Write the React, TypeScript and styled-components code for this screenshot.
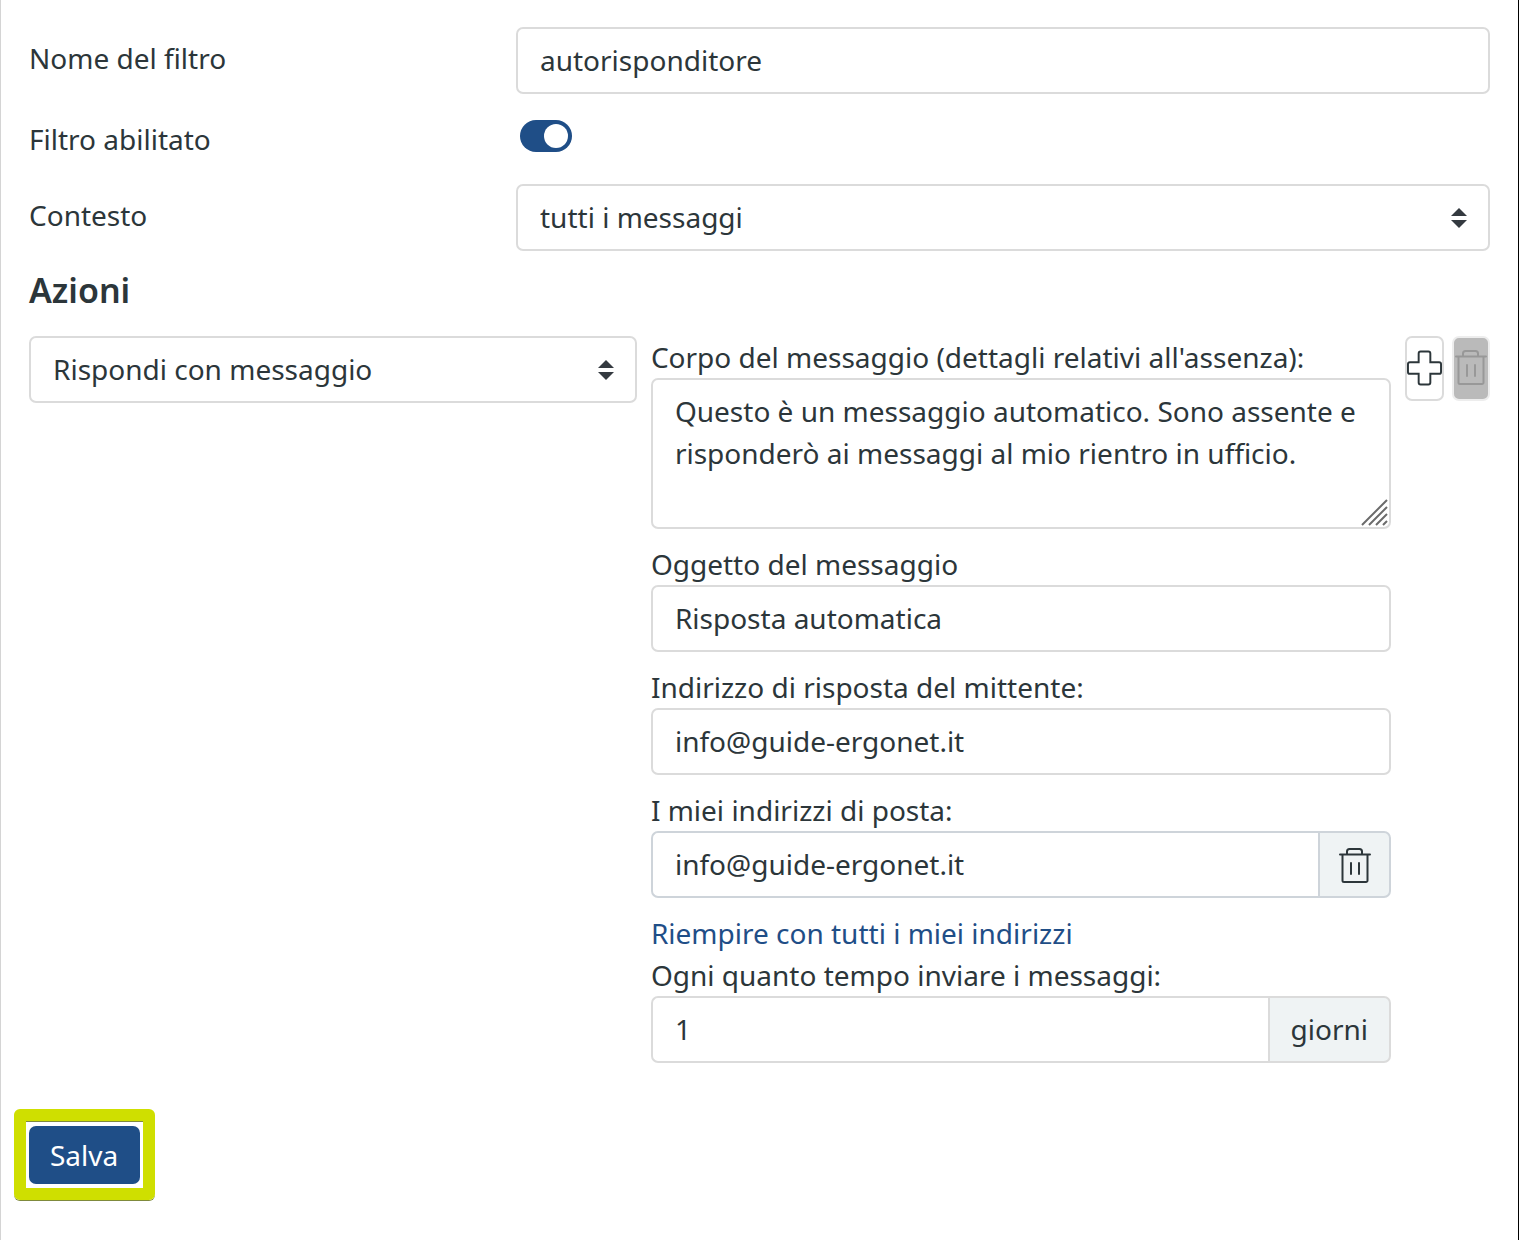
import React, { useState } from "react";
import styled, { createGlobalStyle, css } from "styled-components";

const ink = "#2c363a";
const line = "#dbdbdb";
const brand = "#1f4e87";
const tint = "#eff3f4";

const GlobalStyle = createGlobalStyle`
  *, *::before, *::after { box-sizing: border-box; }
  body {
    margin: 0;
    background: #fff;
    color: ${ink};
    font: 400 28px/42px "Noto Sans", "Open Sans", sans-serif;
  }
  button, input, select, textarea { font: inherit; color: inherit; margin: 0; }
`;

const Page = styled.main`
  min-height: 100vh;
  padding: 27px 13px;
  border-left: 1px solid #d4d4d4;
  border-right: 1px solid #000;
`;

const Fields = styled.div`
  display: flex;
  flex-direction: column;
  gap: 14px;
  padding: 0 15px;
`;

const Row = styled.div`
  display: grid;
  grid-template-columns: 1fr 2fr;
  align-items: start;
`;

const RowLabel = styled.label`
  padding: 10px 0;
`;

const control = css`
  display: block;
  width: 100%;
  min-width: 0;
  height: 67px;
  padding: 0 22px 2px;
  background: #fff;
  border: 2px solid ${line};
  border-radius: 7px;
  outline: none;

  &:focus-visible { border-color: ${brand}; }
`;

const TextInput = styled.input`
  ${control}
`;

const TextArea = styled.textarea`
  ${control}
  height: 151px;
  padding: 10px 22px;
  overflow: hidden;
  resize: none;
`;

const SelectBox = styled.select`
  ${control}
  appearance: none;
  padding-right: 60px;
`;

const Overlaid = styled.div`
  position: relative;
`;

const ArrowsIcon = styled.svg`
  position: absolute;
  top: 24px;
  right: 23px;
  pointer-events: none;
`;

const GripIcon = styled.svg`
  position: absolute;
  right: 2px;
  bottom: 2px;
  pointer-events: none;
`;

const Toggle = styled.input`
  appearance: none;
  display: flex;
  width: 52px;
  height: 32px;
  margin: 12px 4px;
  padding: 4px;
  border-radius: 16px;
  background: #b3bcc0;
  cursor: pointer;

  &::before {
    content: "";
    width: 24px;
    height: 24px;
    border-radius: 50%;
    background: #fff;
  }

  &:checked {
    justify-content: flex-end;
    background: ${brand};
  }
`;

const Heading = styled.h2`
  margin: 0 0 20px;
  font-size: 34px;
  font-weight: 600;
  line-height: 51px;
`;

const ActionRow = styled.div`
  display: grid;
  grid-template-columns: 23fr 28fr auto;
  gap: 14px;
  align-items: start;
`;

const Details = styled.div`
  display: flex;
  flex-direction: column;
  gap: 14px;
`;

const Field = styled.div`
  min-width: 0;
`;

const FieldLabel = styled.label`
  display: block;
`;

const InputGroup = styled.div<{ $edge?: string }>`
  display: flex;

  > * { border-color: ${(p) => p.$edge ?? line}; }
  > :first-child {
    flex: 1;
    border-right: 0;
    border-radius: 7px 0 0 7px;
  }
`;

const addon = css`
  display: flex;
  align-items: center;
  justify-content: center;
  background: ${tint};
  border-width: 2px;
  border-style: solid;
  border-radius: 0 7px 7px 0;
`;

const AddonButton = styled.button`
  ${addon}
  width: 73px;
  padding: 2px 0 0;
  cursor: pointer;
`;

const AddonText = styled.span`
  ${addon}
  padding: 0 21px 2px;
`;

const FillLink = styled.a`
  display: block;
  color: ${brand};
  text-decoration: none;
`;

const Tools = styled.div`
  display: flex;
  gap: 8px;
`;

const ToolButton = styled.button`
  display: flex;
  align-items: center;
  justify-content: center;
  width: 39px;
  height: 65px;
  padding: 0 0 2px;
  background: #fff;
  border: 2px solid ${line};
  border-radius: 7px;
  cursor: pointer;

  &:disabled {
    width: 38px;
    background: #bababa;
    border-color: #ededed;
    color: #989898;
    cursor: default;
  }
`;

const Highlight = styled.div`
  width: fit-content;
  margin-top: 46px;
  padding: 5px 3px 4px;
  border: 12px solid #cfdf00;
  border-radius: 6px;
  box-shadow: 0 1px 0 #7f8a3c, inset 0 1px 0 #7f8a3c;
`;

const SaveButton = styled.button`
  display: block;
  height: 58px;
  padding: 0 22px 0 21px;
  border: 0;
  border-radius: 7px;
  background: ${brand};
  color: #fff;
  cursor: pointer;
`;

function Select({ id, label, options }: { id: string; label?: string; options: string[] }) {
  return (
    <Overlaid>
      <SelectBox id={id} aria-label={label}>
        {options.map((o) => (
          <option key={o}>{o}</option>
        ))}
      </SelectBox>
      <ArrowsIcon width="16" height="20" viewBox="0 0 16 20" fill="#343a40" aria-hidden="true">
        <path d="M8 0l8 8H0zM8 20l8-8H0z" />
      </ArrowsIcon>
    </Overlaid>
  );
}

function TrashIcon() {
  return (
    <svg width="34" height="38" viewBox="0 0 34 38" fill="none" stroke="currentColor" strokeWidth="2" strokeLinecap="round" strokeLinejoin="round" aria-hidden="true">
      <path d="M2 7.5h30M9 7V4.500a2.500 2.500 0 0 1 2.500-2.500h10a2.500 2.500 0 0 1 2.500 2.500V7M4.500 8v25.500a1.500 1.500 0 0 0 1.500 1.500h22a1.500 1.500 0 0 0 1.500-1.500V8M13 16v11M21 16v11" />
    </svg>
  );
}

function PlusIcon() {
  return (
    <svg width="36" height="36" viewBox="0 0 36 36" fill="none" stroke="currentColor" strokeWidth="2" aria-hidden="true">
      <path d="M14 1h8a2 2 0 0 1 2 2v9h9a2 2 0 0 1 2 2v8a2 2 0 0 1-2 2h-9v9a2 2 0 0 1-2 2h-8a2 2 0 0 1-2-2v-9H3a2 2 0 0 1-2-2v-8a2 2 0 0 1 2-2h9V3a2 2 0 0 1 2-2z" />
    </svg>
  );
}

export default function App() {
  const [enabled, setEnabled] = useState(true);
  const [address, setAddress] = useState("info@guide-ergonet.it");

  return (
    <>
      <GlobalStyle />
      <Page>
        <form onSubmit={(e) => e.preventDefault()}>
          <Fields>
            <Row>
              <RowLabel htmlFor="name">Nome del filtro</RowLabel>
              <TextInput id="name" defaultValue="autorisponditore" />
            </Row>
            <Row>
              <RowLabel htmlFor="enabled">Filtro abilitato</RowLabel>
              <Toggle id="enabled" type="checkbox" checked={enabled} onChange={(e) => setEnabled(e.target.checked)} />
            </Row>
            <Row>
              <RowLabel htmlFor="scope">Contesto</RowLabel>
              <Select id="scope" options={["tutti i messaggi"]} />
            </Row>
            <div>
              <Heading>Azioni</Heading>
              <ActionRow>
                <Select id="action" label="Azioni" options={["Rispondi con messaggio"]} />
                <Details>
                  <Field>
                    <FieldLabel htmlFor="body">Corpo del messaggio (dettagli relativi all'assenza):</FieldLabel>
                    <Overlaid>
                      <TextArea
                        id="body"
                        spellCheck={false}
                        defaultValue="Questo è un messaggio automatico. Sono assente e risponderò ai messaggi al mio rientro in ufficio."
                      />
                      <GripIcon width="28" height="28" viewBox="0 0 28 28" stroke="#6b6b6b" strokeWidth="2" aria-hidden="true">
                        <path d="M1 26L26 1M8 26L26 8M15 26L26 15M22 26L26 22" />
                      </GripIcon>
                    </Overlaid>
                  </Field>
                  <Field>
                    <FieldLabel htmlFor="subject">Oggetto del messaggio</FieldLabel>
                    <TextInput id="subject" defaultValue="Risposta automatica" />
                  </Field>
                  <Field>
                    <FieldLabel htmlFor="reply">Indirizzo di risposta del mittente:</FieldLabel>
                    <TextInput id="reply" defaultValue="info@guide-ergonet.it" />
                  </Field>
                  <Field>
                    <FieldLabel htmlFor="addresses">I miei indirizzi di posta:</FieldLabel>
                    <InputGroup $edge="#ced4da">
                      <TextInput id="addresses" value={address} onChange={(e) => setAddress(e.target.value)} />
                      <AddonButton type="button" aria-label="Elimina" onClick={() => setAddress("")}>
                        <TrashIcon />
                      </AddonButton>
                    </InputGroup>
                  </Field>
                  <Field>
                    <FillLink href="#addresses">Riempire con tutti i miei indirizzi</FillLink>
                    <FieldLabel htmlFor="interval">Ogni quanto tempo inviare i messaggi:</FieldLabel>
                    <InputGroup>
                      <TextInput id="interval" defaultValue="1" />
                      <AddonText>giorni</AddonText>
                    </InputGroup>
                  </Field>
                </Details>
                <Tools>
                  <ToolButton type="button" aria-label="Aggiungi">
                    <PlusIcon />
                  </ToolButton>
                  <ToolButton type="button" aria-label="Elimina" disabled>
                    <TrashIcon />
                  </ToolButton>
                </Tools>
              </ActionRow>
            </div>
          </Fields>
          <Highlight>
            <SaveButton type="submit">Salva</SaveButton>
          </Highlight>
        </form>
      </Page>
    </>
  );
}
